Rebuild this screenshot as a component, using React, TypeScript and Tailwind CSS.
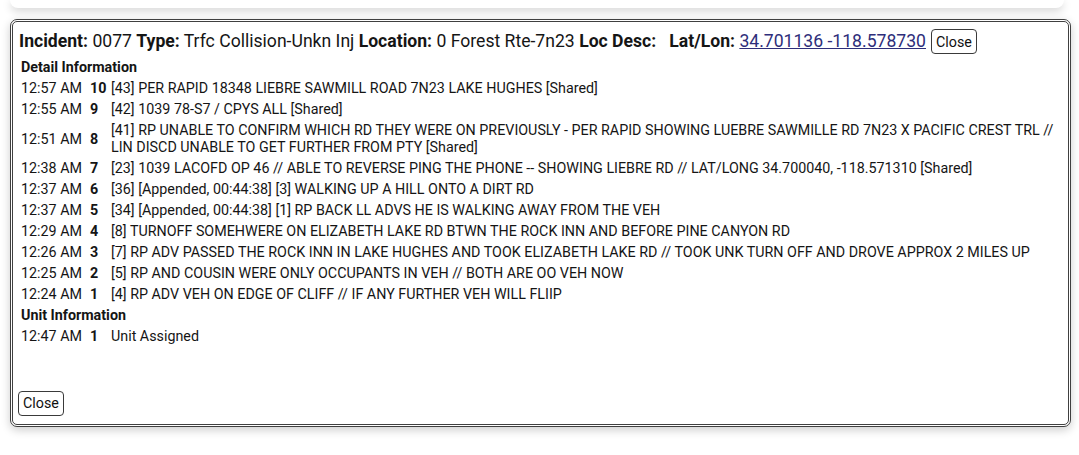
import React from "react"

const DETAILS = [
    { time: "12:57 AM", n: "10", text: "[43] PER RAPID 18348 LIEBRE SAWMILL ROAD 7N23 LAKE HUGHES [Shared]" },
    { time: "12:55 AM", n: "9", text: "[42] 1039 78-S7 / CPYS ALL [Shared]" },
    { time: "12:51 AM", n: "8", text: "[41] RP UNABLE TO CONFIRM WHICH RD THEY WERE ON PREVIOUSLY - PER RAPID SHOWING LUEBRE SAWMILLE RD 7N23 X PACIFIC CREST TRL // LIN DISCD UNABLE TO GET FURTHER FROM PTY [Shared]" },
    { time: "12:38 AM", n: "7", text: "[23] 1039 LACOFD OP 46 // ABLE TO REVERSE PING THE PHONE -- SHOWING LIEBRE RD // LAT/LONG 34.700040, -118.571310 [Shared]" },
    { time: "12:37 AM", n: "6", text: "[36] [Appended, 00:44:38] [3] WALKING UP A HILL ONTO A DIRT RD" },
    { time: "12:37 AM", n: "5", text: "[34] [Appended, 00:44:38] [1] RP BACK LL ADVS HE IS WALKING AWAY FROM THE VEH" },
    { time: "12:29 AM", n: "4", text: "[8] TURNOFF SOMEHWERE ON ELIZABETH LAKE RD BTWN THE ROCK INN AND BEFORE PINE CANYON RD" },
    { time: "12:26 AM", n: "3", text: "[7] RP ADV PASSED THE ROCK INN IN LAKE HUGHES AND TOOK ELIZABETH LAKE RD // TOOK UNK TURN OFF AND DROVE APPROX 2 MILES UP" },
    { time: "12:25 AM", n: "2", text: "[5] RP AND COUSIN WERE ONLY OCCUPANTS IN VEH // BOTH ARE OO VEH NOW" },
    { time: "12:24 AM", n: "1", text: "[4] RP ADV VEH ON EDGE OF CLIFF // IF ANY FURTHER VEH WILL FLIIP" },
]

const UNITS = [
    { time: "12:47 AM", n: "1", text: "Unit Assigned" },
]

function Row({ time, n, text }: { time: string; n: string; text: string }) {
    return (
        <tr>
            <td className="w-[69px] pl-[2px] py-[2px] align-middle whitespace-nowrap">{time}</td>
            <td className="w-[22px] pl-[2px] py-[2px] align-middle font-bold">{n}</td>
            <td className="pl-[1px] pr-[2px] py-[2px] align-middle">{text}</td>
        </tr>
    )
}

function Section({ title }: { title: string }) {
    return (
        <tr>
            <td colSpan={3} className="pl-[2px] py-[2px] font-bold">{title}</td>
        </tr>
    )
}

function CloseButton() {
    return (
        <button className="h-[25px] px-[4px] border border-[#3a3a3a] rounded-[4px] bg-white text-[14.3px] leading-none text-[#111]">
            Close
        </button>
    )
}

export default function App() {
    return (
        <div className="min-h-screen bg-white text-[#151515]" style={{ fontFamily: "Roboto, 'Liberation Sans', sans-serif" }}>
            {/* previous card, cut off at top */}
            <div className="ml-[10px] mr-[15px] h-[8px] bg-white rounded-b-[8px] shadow-[0_3px_8px_rgba(0,0,0,0.18)]" />

            {/* incident panel */}
            <div className="ml-[10px] mr-[8px] mt-[11px] border-[3px] border-double border-[#404040] rounded-[7px] bg-white shadow-[0_3px_10px_rgba(0,0,0,0.2)] pl-[6px] pr-[4px] pt-[6px] pb-[8px]">
                <div className="flex items-center h-[26px] text-[17.6px] whitespace-nowrap">
                    <span>
                        <b>Incident:</b> 0077 <b>Type:</b> Trfc Collision-Unkn Inj <b>Location:</b> 0 Forest Rte-7n23 <b>Loc Desc:</b>&nbsp;&nbsp; <b>Lat/Lon:</b>{" "}
                        <a href="#" className="text-[#2e2e7a] underline">34.701136 -118.578730</a>
                    </span>
                    <span className="ml-[5px]"><CloseButton /></span>
                </div>

                <table className="w-full border-collapse text-[14.3px] leading-[17px] mt-[3px]">
                    <tbody>
                        <Section title="Detail Information" />
                        {DETAILS.map((d, i) => <Row key={i} {...d} />)}
                        <Section title="Unit Information" />
                        {UNITS.map((d, i) => <Row key={i} {...d} />)}
                    </tbody>
                </table>

                <div className="mt-[44px] -ml-[1px]">
                    <CloseButton />
                </div>
            </div>
        </div>
    )
}
